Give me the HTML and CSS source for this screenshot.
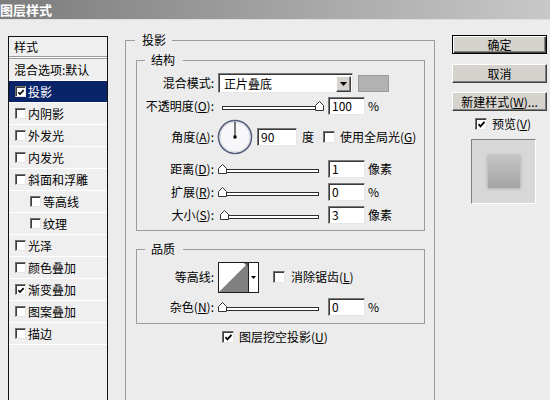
FILE: index.html
```html
<!DOCTYPE html>
<html lang="zh-CN">
<head>
<meta charset="utf-8">
<title>图层样式</title>
<link rel="stylesheet" href="styles.css">
</head>
<body>
<div class="titlebar"><span class="title">图层样式</span></div>
<div class="main">
  <div class="stylelist">
    <div class="list-head">样式</div>
    <div class="list-sep"></div>
    <div class="item plain">混合选项:默认</div>
    <div class="item selected"><span class="cb on"><svg width="9" height="9" viewBox="0 0 9 9"><polyline points="1.5,4.2 3.4,6.3 7.5,1.8" fill="none" stroke="#000" stroke-width="1.8"/></svg></span>投影</div>
    <div class="item"><span class="cb"></span>内阴影</div>
    <div class="item"><span class="cb"></span>外发光</div>
    <div class="item"><span class="cb"></span>内发光</div>
    <div class="item"><span class="cb"></span>斜面和浮雕</div>
    <div class="item sub"><span class="cb"></span>等高线</div>
    <div class="item sub"><span class="cb"></span>纹理</div>
    <div class="item"><span class="cb"></span>光泽</div>
    <div class="item"><span class="cb"></span>颜色叠加</div>
    <div class="item"><span class="cb on"><svg width="9" height="9" viewBox="0 0 9 9"><polyline points="1.5,4.2 3.4,6.3 7.5,1.8" fill="none" stroke="#000" stroke-width="1.8"/></svg></span>渐变叠加</div>
    <div class="item"><span class="cb"></span>图案叠加</div>
    <div class="item"><span class="cb"></span>描边</div>
  </div>

  <div class="center">
    <fieldset class="group outer">
      <legend>投影</legend>
      <div class="outer-body">
        <fieldset class="group inner">
          <legend>结构</legend>
          <div class="gbody">
            <div class="row r-mode">
              <span class="lbl">混合模式:</span>
              <div class="select"><span class="sel-text">正片叠底</span><span class="sel-btn"><svg width="7" height="4" viewBox="0 0 7 4"><polygon points="0,0 7,0 3.5,4" fill="#000"/></svg></span></div>
              <span class="swatch"></span>
            </div>
            <div class="row r-opacity">
              <span class="lbl">不透明度(<u>O</u>):</span>
              <div class="slider"><div class="track"></div><svg class="thumb" style="left:97px" width="9" height="10" viewBox="0 0 9 10"><polygon points="0.5,4.5 4.5,0.5 8.5,4.5 8.5,9.5 0.5,9.5" fill="#fff" stroke="#333"/></svg></div>
              <span class="num">100</span>
              <span class="unit">%</span>
            </div>
            <div class="row r-angle">
              <span class="lbl">角度(<u>A</u>):</span>
              <svg class="dial" width="36" height="36" viewBox="0 0 36 36">
                <circle cx="18" cy="18" r="16.5" fill="#f7f7f9" stroke="#56607c" stroke-width="1.6"/>
                <circle cx="18" cy="18" r="15" fill="none" stroke="#d8dae2" stroke-width="1"/>
                <line x1="18" y1="18" x2="18" y2="2.5" stroke="#000" stroke-width="1"/>
                <rect x="16.5" y="16.5" width="3" height="3" fill="#000"/>
              </svg>
              <span class="num wide">90</span>
              <span class="unit deg">度</span>
              <span class="cb global"></span>
              <span class="cb-text">使用全局光(<u>G</u>)</span>
            </div>
            <div class="row r-dist">
              <span class="lbl">距离(<u>D</u>):</span>
              <div class="slider"><div class="track"></div><svg class="thumb" style="left:0px" width="9" height="10" viewBox="0 0 9 10"><polygon points="0.5,4.5 4.5,0.5 8.5,4.5 8.5,9.5 0.5,9.5" fill="#fff" stroke="#333"/></svg></div>
              <span class="num">1</span>
              <span class="unit">像素</span>
            </div>
            <div class="row r-spread">
              <span class="lbl">扩展(<u>R</u>):</span>
              <div class="slider"><div class="track"></div><svg class="thumb" style="left:0px" width="9" height="10" viewBox="0 0 9 10"><polygon points="0.5,4.5 4.5,0.5 8.5,4.5 8.5,9.5 0.5,9.5" fill="#fff" stroke="#333"/></svg></div>
              <span class="num">0</span>
              <span class="unit">%</span>
            </div>
            <div class="row r-size">
              <span class="lbl">大小(<u>S</u>):</span>
              <div class="slider"><div class="track"></div><svg class="thumb" style="left:2px" width="9" height="10" viewBox="0 0 9 10"><polygon points="0.5,4.5 4.5,0.5 8.5,4.5 8.5,9.5 0.5,9.5" fill="#fff" stroke="#333"/></svg></div>
              <span class="num">3</span>
              <span class="unit">像素</span>
            </div>
          </div>
        </fieldset>

        <fieldset class="group inner quality">
          <legend>品质</legend>
          <div class="gbody qbody">
            <div class="row r-contour">
              <span class="lbl">等高线:</span>
              <svg class="contour" width="41" height="31" viewBox="0 0 41 31">
                <rect x="0.5" y="0.5" width="40" height="30" fill="#fff" stroke="#1e1e1e"/>
                <polygon points="1,30 30,1 30,30" fill="#808080"/>
                <polygon points="26,1 30,1 30,5" fill="#5a5a5a"/>
                <line x1="30.5" y1="0.5" x2="30.5" y2="30.5" stroke="#1e1e1e"/>
                <polygon points="33,14 38,14 35.5,17" fill="#000"/>
              </svg>
              <span class="cb anti"></span>
              <span class="cb-text">消除锯齿(<u>L</u>)</span>
            </div>
            <div class="row r-noise">
              <span class="lbl">杂色(<u>N</u>):</span>
              <div class="slider"><div class="track"></div><svg class="thumb" style="left:0px" width="9" height="10" viewBox="0 0 9 10"><polygon points="0.5,4.5 4.5,0.5 8.5,4.5 8.5,9.5 0.5,9.5" fill="#fff" stroke="#333"/></svg></div>
              <span class="num">0</span>
              <span class="unit">%</span>
            </div>
          </div>
        </fieldset>

        <div class="knock">
          <span class="cb on"><svg width="9" height="9" viewBox="0 0 9 9"><polyline points="1.5,4.2 3.4,6.3 7.5,1.8" fill="none" stroke="#000" stroke-width="1.8"/></svg></span>
          <span class="cb-text">图层挖空投影(<u>U</u>)</span>
        </div>
      </div>
    </fieldset>
  </div>

  <div class="side">
    <div class="btn default">确定</div>
    <div class="btn cancel">取消</div>
    <div class="btn newstyle">新建样式(<u>W</u>)...</div>
    <div class="preview-row">
      <span class="cb on"><svg width="9" height="9" viewBox="0 0 9 9"><polyline points="1.5,4.2 3.4,6.3 7.5,1.8" fill="none" stroke="#000" stroke-width="1.8"/></svg></span>
      <span class="cb-text">预览(<u>V</u>)</span>
    </div>
    <div class="preview-box"><div class="preview-square"></div></div>
  </div>
</div>
</body>
</html>
```

FILE: styles.css
```css
* { box-sizing: border-box; }
html, body { margin: 0; padding: 0; }
body {
  width: 550px;
  height: 400px;
  overflow: hidden;
  background: #ececec;
  font-family: "Noto Sans CJK SC", "Noto Sans", sans-serif;
  font-size: 12px;
  line-height: 16px;
  color: #000;
}
u { text-decoration: underline; text-underline-offset: 1px; }

.titlebar {
  height: 20px;
  background: linear-gradient(to right, #7c7c7c, #c8c8c8);
  border-bottom: 1px solid #dedede;
}
.title {
  color: #fff;
  font-weight: bold;
  font-size: 13px;
  line-height: 19px;
}

.main {
  display: flex;
  align-items: flex-start;
  height: 380px;
  overflow: hidden;
}

/* left style list */
.stylelist {
  margin-left: 8px;
  margin-top: 16px;
  width: 100px;
  height: 366px;
  border: 1px solid #111;
  border-bottom: none;
  background: #efefef;
}
.list-head {
  height: 19px;
  line-height: 19px;
  padding-left: 5px;
}
.list-sep {
  height: 3px;
  border-top: 1px solid #9a9a9a;
  border-bottom: 1px solid #9a9a9a;
  background: #fff;
}
.item {
  height: 22px;
  border-bottom: 1px solid #fff;
  display: flex;
  align-items: center;
  padding-left: 6px;
  white-space: nowrap;
}
.item.plain { padding-left: 5px; }
.item.sub { padding-left: 21px; }
.item .cb { width: 11px; height: 11px; margin-right: 2px; }
.item.selected { background: #0a246a; color: #fff; }

/* checkbox */
.cb {
  display: inline-flex;
  align-items: center;
  justify-content: center;
  width: 12px;
  height: 12px;
  background: #fff;
  border-top: 1px solid #6e6e6e;
  border-left: 1px solid #6e6e6e;
  border-right: 1px solid #e4e4e4;
  border-bottom: 1px solid #e4e4e4;
  box-shadow: inset 1px 1px 0 #3c3c3c;
  flex: none;
}
.cb svg { display: block; margin: 1px 0 0 1px; }
.cb-text { margin-left: 5px; white-space: nowrap; }

/* center */
.center {
  margin-left: 17px;
  margin-top: 12px;
  width: 310px;
}
.group {
  margin: 0;
  padding: 0;
  min-width: 0;
  border: 1px solid #9c9c9c;
}
.group > legend {
  line-height: 16px;
  padding: 0 6px 0 7px;
}
.outer { height: 372px; border-bottom: none; }
.outer > legend { margin-left: 9px; }
.outer-body { padding: 4px 9px 0 10px; }

.inner > legend { margin-left: 8px; padding: 0 8px 0 6px; }
.gbody { padding: 4px 0 4px 0; }
.quality { margin-top: 10px; }
.qbody { padding: 2px 0 4px 0; }

.row {
  display: flex;
  align-items: center;
  white-space: nowrap;
}
.r-mode { height: 22px; }
.r-opacity { height: 24px; }
.r-angle { height: 38px; }
.r-dist { height: 25px; }
.r-spread { height: 22px; }
.r-size { height: 23px; }
.r-contour { height: 36px; }
.r-noise { height: 24px; }

.lbl {
  width: 77px;
  text-align: right;
  flex: none;
}

.select {
  margin-left: 4px;
  width: 135px;
  height: 20px;
  background: #fff;
  border-top: 1px solid #7a7a7a;
  border-left: 1px solid #7a7a7a;
  border-right: 1px solid #e6e6e6;
  border-bottom: 1px solid #e6e6e6;
  box-shadow: inset 1px 1px 0 #3a3a3a;
  display: flex;
  align-items: center;
  justify-content: space-between;
  padding: 1px 1px 0 5px;
}
.sel-btn {
  width: 15px;
  height: 16px;
  background: #d6d3ce;
  border-top: 1px solid #fff;
  border-left: 1px solid #fff;
  border-right: 1px solid #404040;
  border-bottom: 1px solid #404040;
  box-shadow: inset -1px -1px 0 #808080;
  display: flex;
  align-items: center;
  justify-content: center;
}
.swatch {
  margin-left: 5px;
  width: 31px;
  height: 17px;
  background: #b2b2b2;
  border: 1px solid #9a9a9a;
}

.slider {
  position: relative;
  margin-left: 4px;
  width: 104px;
  height: 10px;
  padding-top: 5px;
  flex: none;
}
.track {
  margin-left: 4px;
  width: 97px;
  height: 4px;
  background: #fff;
  border: 1px solid #2e2e2e;
}
.thumb {
  position: absolute;
  top: 0;
  display: block;
}

.num {
  margin-left: 6px;
  width: 37px;
  height: 18px;
  background: #fff;
  border-top: 1px solid #7a7a7a;
  border-left: 1px solid #7a7a7a;
  border-right: 1px solid #e6e6e6;
  border-bottom: 1px solid #e6e6e6;
  box-shadow: inset 1px 1px 0 #3a3a3a;
  padding-left: 3px;
  line-height: 16px;
  flex: none;
}
.num.wide { width: 40px; margin-left: 4px; }
.unit { margin-left: 3px; }
.unit.deg { margin-left: 5px; }
.cb.global { margin-left: 9px; }

.dial { margin-left: 3px; display: block; flex: none; }
.contour { margin-left: 4px; display: block; flex: none; }
.cb.anti { margin-left: 14px; }
.r-contour .cb-text { margin-left: 6px; }

.knock {
  display: flex;
  align-items: center;
  height: 16px;
  margin-top: 5px;
  padding-left: 86px;
}

/* right side */
.side {
  margin-left: 17px;
  margin-top: 15px;
  width: 95px;
}
.btn {
  height: 19px;
  background: #d6d3ce;
  border-top: 1px solid #fff;
  border-left: 1px solid #fff;
  border-right: 1px solid #404040;
  border-bottom: 1px solid #404040;
  box-shadow: inset -1px -1px 0 #808080;
  text-align: center;
  line-height: 17px;
  white-space: nowrap;
}
.btn.default {
  border: 1px solid #000;
  box-shadow: inset 1px 1px 0 #fff, inset -1px -1px 0 #404040, inset -2px -2px 0 #808080;
}
.btn.cancel { margin-top: 10px; }
.btn.newstyle { margin-top: 9px; }
.preview-row {
  display: flex;
  align-items: center;
  height: 16px;
  margin-top: 5px;
  padding-left: 23px;
}
.preview-box {
  margin-top: 7px;
  margin-left: 19px;
  width: 65px;
  height: 65px;
  background: #d8d8d8;
  border-top: 1px solid #808080;
  border-left: 1px solid #808080;
  border-right: 1px solid #fff;
  border-bottom: 1px solid #fff;
  display: flex;
  align-items: center;
  justify-content: center;
}
.preview-square {
  width: 32px;
  height: 32px;
  background: linear-gradient(#c4c4c4, #a4a4a4);
  box-shadow: 0 0 3px 1px #b4b4b4;
}
```
